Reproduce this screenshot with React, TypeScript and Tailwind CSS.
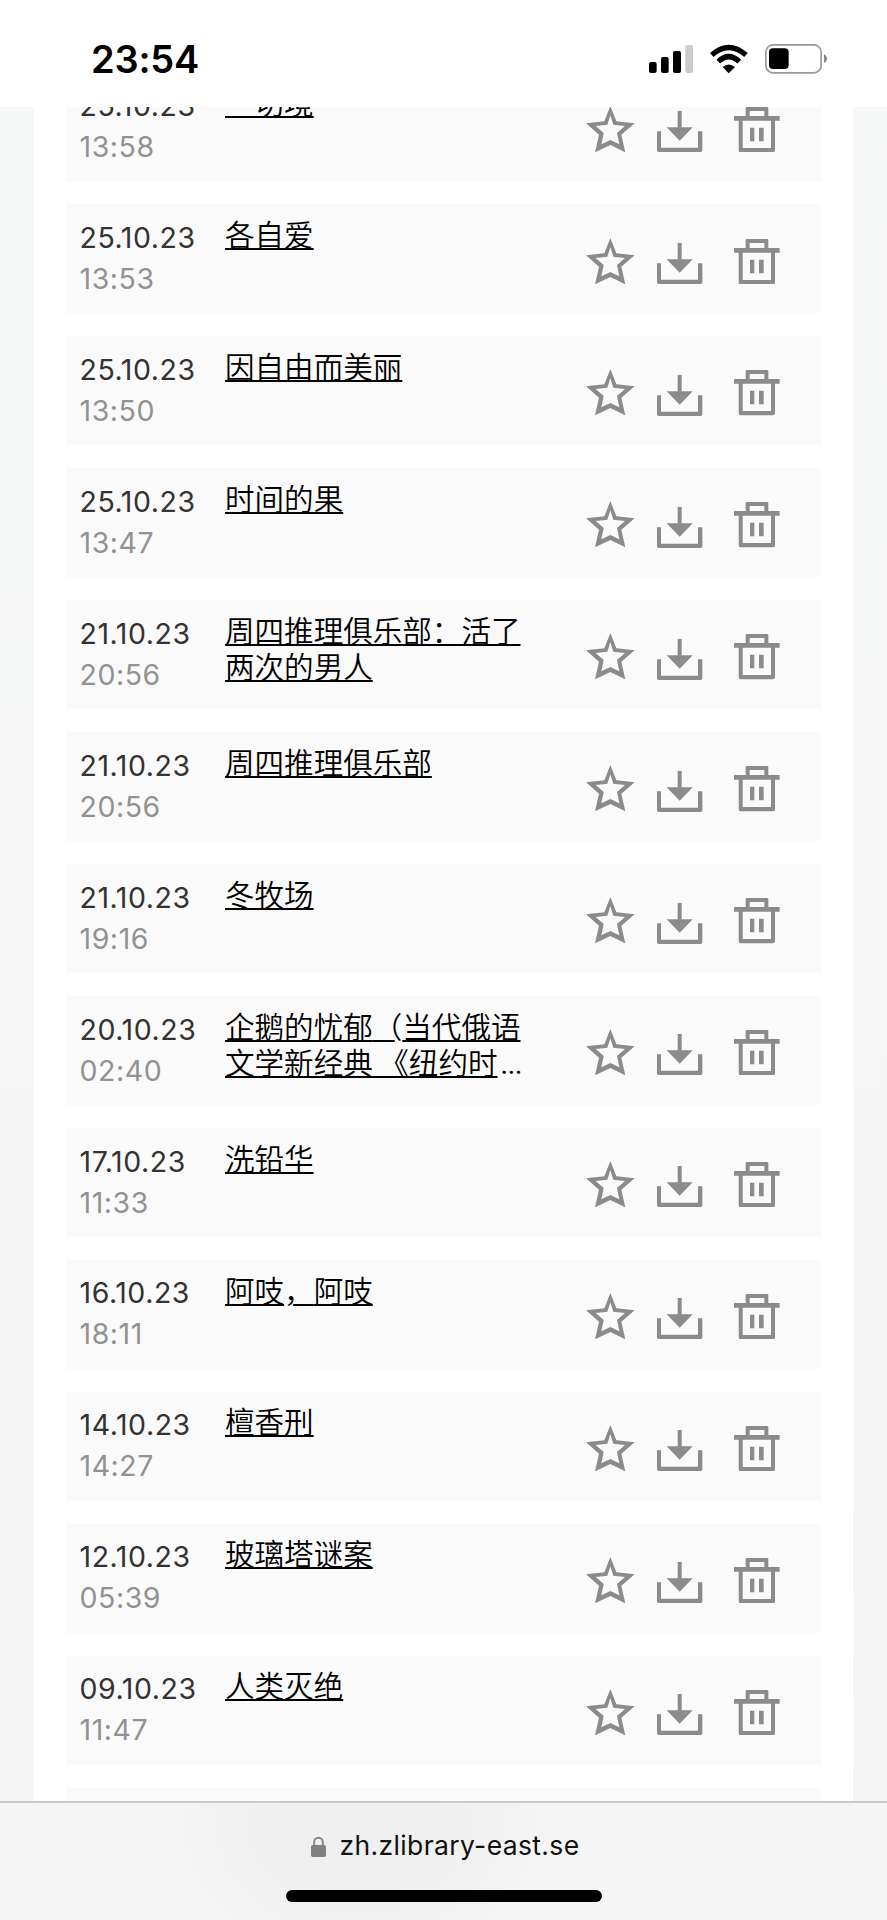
type HistoryItem = {
    date: string;
    time: string;
    lines: string[];
    truncated?: boolean;
};

const HISTORY: HistoryItem[] = [
    { date: "25.10.23", time: "13:58", lines: ["一切境"] },
    { date: "25.10.23", time: "13:53", lines: ["各自爱"] },
    { date: "25.10.23", time: "13:50", lines: ["因自由而美丽"] },
    { date: "25.10.23", time: "13:47", lines: ["时间的果"] },
    {
        date: "21.10.23",
        time: "20:56",
        lines: ["周四推理俱乐部：活了", "两次的男人"],
    },
    { date: "21.10.23", time: "20:56", lines: ["周四推理俱乐部"] },
    { date: "21.10.23", time: "19:16", lines: ["冬牧场"] },
    {
        date: "20.10.23",
        time: "02:40",
        lines: ["企鹅的忧郁（当代俄语", "文学新经典 《纽约时"],
        truncated: true,
    },
    { date: "17.10.23", time: "11:33", lines: ["洗铅华"] },
    { date: "16.10.23", time: "18:11", lines: ["阿吱，阿吱"] },
    { date: "14.10.23", time: "14:27", lines: ["檀香刑"] },
    { date: "12.10.23", time: "05:39", lines: ["玻璃塔谜案"] },
    { date: "09.10.23", time: "11:47", lines: ["人类灭绝"] },
];

function StarIcon() {
    return (
        <svg viewBox="48 82 146 139" className="h-[46.3px] w-[48.7px]" fill="#8b8b8b">
            <path
                fillRule="evenodd"
                d="M121 82 139 128 194 134 154 168 166 221 121 199 75 221 87 168 48 134 103 128ZM121 110 112 138 77 142 101 163 94 197 121 184 148 197 141 163 165 142 130 138Z"
            />
        </svg>
    );
}

function DownloadIcon() {
    return (
        <svg viewBox="262 98 137 123" className="h-[41px] w-[45.7px]" fill="#8b8b8b">
            <path d="M324 98h12v49h33l-39 40-39-40h33Z" />
            <path d="M262 159h12v49h111v-49h13v57q0 5-5 5H267q-5 0-5-5Z" />
        </svg>
    );
}

function TrashIcon() {
    return (
        <svg viewBox="493 85 137 136" className="h-[45.3px] w-[45.7px]" fill="#8b8b8b">
            <path
                fillRule="evenodd"
                d="M528 112V89q0-4 4-4h60q4 0 4 4v23h34v14h-14v89q0 6-6 6h-97q-6 0-6-6v-89h-14v-14ZM540 112h44V97h-44ZM519 126v82h85v-82Z"
            />
            <path d="M541 147h13v41h-13ZM568 147h14v41h-14Z" />
        </svg>
    );
}

function StatusBar() {
    return (
        <header className="flex h-[107px] shrink-0 items-start justify-between bg-white pr-[60px] pl-[91px]">
            <div className="pt-[35px] text-[38px] leading-[48px] font-semibold tracking-[-0.2px] text-black">
                23:54
            </div>
            <div className="flex items-start pt-[44px]">
                <svg viewBox="87 72 132 90" className="h-[30px] w-[44px]">
                    <rect x="87" y="126" width="23" height="33" rx="6" />
                    <rect x="123" y="111" width="23" height="48" rx="6" />
                    <rect x="159" y="93" width="24" height="66" rx="6" />
                    <rect x="196" y="75" width="23" height="84" rx="6" fill="#cbcbcb" />
                </svg>
                <svg viewBox="270 72 114 90" className="ml-[17px] h-[30px] w-[38px]">
                    <path
                        d="M275 105Q326 60 378 105M295 125Q326 95 358 125"
                        fill="none"
                        stroke="#000"
                        strokeWidth="16"
                    />
                    <path d="M308 141Q326 126 345 141L326 160Z" />
                </svg>
                <svg viewBox="435 72 187 90" className="ml-[17px] h-[30px] w-[62.3px]">
                    <rect
                        x="437.5"
                        y="74.5"
                        width="166"
                        height="84"
                        rx="22"
                        fill="none"
                        stroke="#999"
                        strokeWidth="5"
                    />
                    <rect x="447" y="85" width="59" height="62" rx="12" />
                    <path d="M612 103Q621 107 621 116T612 129Z" fill="#888" />
                </svg>
            </div>
        </header>
    );
}

// the underline leaves a gap where "（" and "，" cross it
function renderChar(char: string, i: number) {
    if (char === "（") {
        return (
            <span key={i}>
                <span className="tracking-[15.4px]">{"\u00a0"}</span>
                <span className="-ml-[22px] inline-block w-[1em]">{char}</span>
            </span>
        );
    }
    if (char === "，") {
        return (
            <span key={i}>
                <span className="inline-block w-[1em]">{char}</span>
                <span className="-ml-[20.5px] tracking-[13.9px]">{"\u00a0"}</span>
            </span>
        );
    }
    return char;
}

function Title({ lines, truncated }: Pick<HistoryItem, "lines" | "truncated">) {
    return (
        <div className="w-[310px] pt-[11.6px] font-['Noto_Sans_CJK_SC',sans-serif] text-[29.55px] leading-[36.5px] font-[350] whitespace-nowrap text-black">
            {lines.map((line, i) => (
                <div key={line} className="h-[36.5px]">
                    <a className="underline decoration-2 underline-offset-[1.5px]">
                        {line.split(/([（，])/).map(renderChar)}
                    </a>
                    {truncated && i === lines.length - 1 && (
                        <span className="ml-[3px] font-['Inter',sans-serif] text-[25px] font-normal">
                            …
                        </span>
                    )}
                </div>
            ))}
        </div>
    );
}

function HistoryRow({ item }: { item: HistoryItem }) {
    return (
        <div className="flex h-[109px] shrink-0 items-start bg-[#fafafa] pl-[13.5px]">
            <div className="w-[145.5px] pt-[12.5px] text-[28.5px] leading-[41px] tracking-[0.55px]">
                <div className="text-[#333]">{item.date}</div>
                <div className="text-[#929292]">{item.time}</div>
            </div>
            <Title lines={item.lines} truncated={item.truncated} />
            <div className="ml-[51px] flex h-[79.4px] items-end">
                <StarIcon />
                <div className="ml-[22.7px]">
                    <DownloadIcon />
                </div>
                <div className="ml-[31.3px]">
                    <TrashIcon />
                </div>
            </div>
        </div>
    );
}

function BrowserBar() {
    return (
        <footer className="flex h-[119px] shrink-0 flex-col items-center border-t-2 border-[#c9c9c9] bg-[#f5f5f5] bg-[radial-gradient(ellipse_190px_150px_at_360px_20px,#efefef_40%,#f5f5f5_100%)]">
            <div className="flex h-[87px] items-center pb-[1px] pl-[3px]">
                <svg viewBox="0 0 15 21" className="mr-[14px] h-[21px] w-[15px]">
                    <path
                        d="M3.2 10V6a4.3 4.3 0 0 1 8.6 0v4"
                        fill="none"
                        stroke="#858585"
                        strokeWidth="1.9"
                    />
                    <rect y="9" width="15" height="12" rx="2" fill="#808080" />
                </svg>
                <span className="text-[26.5px] tracking-[0.35px] text-[#111]">
                    zh.zlibrary-east.se
                </span>
            </div>
            <div className="h-[12px] w-[316px] rounded-full bg-black" />
        </footer>
    );
}

export default function App() {
    return (
        <div className="flex h-[1920px] w-[887px] flex-col overflow-hidden bg-white font-['Inter',sans-serif]">
            <StatusBar />
            <main className="h-[1694px] overflow-hidden bg-linear-to-b from-[#f6f7f7] to-[#f5f5f5] px-[34px]">
                <div className="flex h-full flex-col overflow-hidden bg-white px-[32px]">
                    <div className="-mt-[34.5px] flex w-[755px] flex-col gap-[22.95px]">
                        {HISTORY.map((item) => (
                            <HistoryRow key={item.date + item.time + item.lines[0]} item={item} />
                        ))}
                        <div className="h-[109px] shrink-0 bg-[#fafafa]" />
                    </div>
                </div>
            </main>
            <BrowserBar />
        </div>
    );
}
